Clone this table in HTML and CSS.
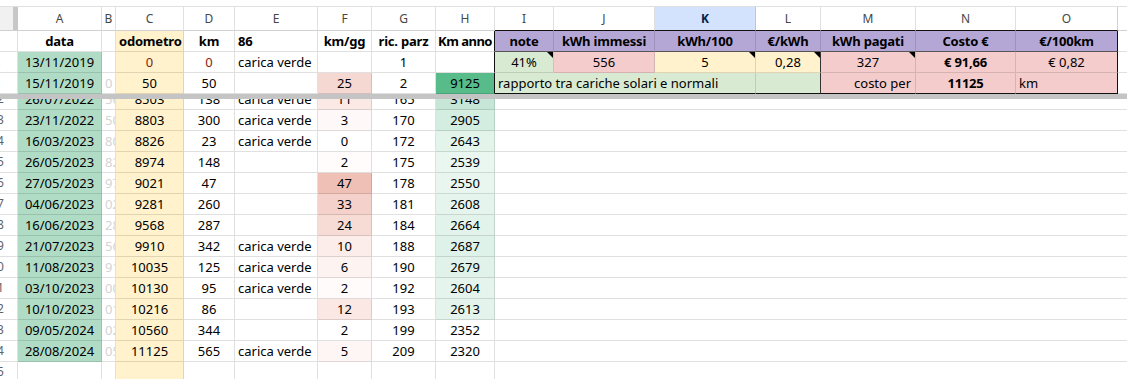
FILE: index.html
```html
<!DOCTYPE html>
<html lang="it">
<head>
<meta charset="utf-8">
<title>Foglio</title>
<link rel="stylesheet" href="styles.css">
</head>
<body>
<div class="sheet">
  <div class="gap"></div>
  <div class="row colhead">
    <div class="c w-rh corner"></div>
    <div class="c w-a">A</div>
    <div class="c w-b">B</div>
    <div class="c w-c">C</div>
    <div class="c w-d">D</div>
    <div class="c w-e">E</div>
    <div class="c w-f">F</div>
    <div class="c w-g">G</div>
    <div class="c w-h edge-r">H</div>
    <div class="c w-i blk-b">I</div>
    <div class="c w-j blk-b">J</div>
    <div class="c w-k blk-b sel">K</div>
    <div class="c w-l blk-b">L</div>
    <div class="c w-m blk-b">M</div>
    <div class="c w-n blk-b">N</div>
    <div class="c w-o blk-b edge-r">O</div>
    <div class="c w-p"></div>
  </div>

  <div class="frozen">
    <div class="row">
      <div class="c w-rh rh"><span>1</span></div>
      <div class="c w-a b">data</div>
      <div class="c w-b"></div>
      <div class="c w-c yel b">odometro</div>
      <div class="c w-d b">km</div>
      <div class="c w-e left b">86</div>
      <div class="c w-f b">km/gg</div>
      <div class="c w-g b">ric. parz</div>
      <div class="c w-h b tight edge-r">Km anno</div>
      <div class="c w-i pur b hd">note</div>
      <div class="c w-j pur b hd">kWh immessi</div>
      <div class="c w-k pur b hd">kWh/100</div>
      <div class="c w-l pur b hd">€/kWh</div>
      <div class="c w-m pur b hd">kWh pagati</div>
      <div class="c w-n pur b hd">Costo €</div>
      <div class="c w-o pur b hd edge-r">€/100km</div>
      <div class="c w-p"></div>
    </div>
    <div class="row">
      <div class="c w-rh rh"><span>2</span></div>
      <div class="c w-a grn">13/11/2019</div>
      <div class="c w-b faint"></div>
      <div class="c w-c yel red">0</div>
      <div class="c w-d red">0</div>
      <div class="c w-e left">carica verde</div>
      <div class="c w-f"></div>
      <div class="c w-g">1</div>
      <div class="c w-h edge-r"></div>
      <div class="c w-i lgrn note">41%</div>
      <div class="c w-j pnk">556</div>
      <div class="c w-k yel note">5</div>
      <div class="c w-l yel note dark-r">0,28</div>
      <div class="c w-m pnk note">327</div>
      <div class="c w-n pnk b">€ 91,66</div>
      <div class="c w-o pnk edge-r">€ 0,82</div>
      <div class="c w-p"></div>
    </div>
    <div class="row">
      <div class="c w-rh rh"><span>3</span></div>
      <div class="c w-a grn">15/11/2019</div>
      <div class="c w-b faint">0</div>
      <div class="c w-c yel">50</div>
      <div class="c w-d">50</div>
      <div class="c w-e"></div>
      <div class="c w-f" style="background:#f6d8d2">25</div>
      <div class="c w-g">2</div>
      <div class="c w-h edge-r" style="background:#57bb8a">9125</div>
      <div class="c w-ijk lgrn left blk-bb">rapporto tra cariche solari e normali</div>
      <div class="c w-l lgrn blk-bb dark-r"></div>
      <div class="c w-m pnk right blk-bb">costo per</div>
      <div class="c w-n pnk b blk-bb">11125</div>
      <div class="c w-o pnk left blk-bb edge-r">km</div>
      <div class="c w-p"></div>
    </div>
  </div>

  <div class="freeze"></div>

  <div class="scroll">
    <div class="scroll-inner">
      <div class="row"><div class="c w-rh rh"><span>42</span></div><div class="c w-a grn">26/07/2022</div><div class="c w-b faint">56</div><div class="c w-c yel">8503</div><div class="c w-d">138</div><div class="c w-e left">carica verde</div><div class="c w-f" style="background:#fbe9e6">11</div><div class="c w-g">165</div><div class="c w-h" style="background:#c6e7d7">3148</div><div class="c w-rest"></div></div>
      <div class="row"><div class="c w-rh rh"><span>43</span></div><div class="c w-a grn">23/11/2022</div><div class="c w-b faint">50</div><div class="c w-c yel">8803</div><div class="c w-d">300</div><div class="c w-e left">carica verde</div><div class="c w-f" style="background:#fef9f8">3</div><div class="c w-g">170</div><div class="c w-h" style="background:#d3ede1">2905</div><div class="c w-rest"></div></div>
      <div class="row"><div class="c w-rh rh"><span>44</span></div><div class="c w-a grn">16/03/2023</div><div class="c w-b faint">80</div><div class="c w-c yel">8826</div><div class="c w-d">23</div><div class="c w-e left">carica verde</div><div class="c w-f">0</div><div class="c w-g">172</div><div class="c w-h" style="background:#e3f4eb">2643</div><div class="c w-rest"></div></div>
      <div class="row"><div class="c w-rh rh"><span>45</span></div><div class="c w-a grn">26/05/2023</div><div class="c w-b faint">82</div><div class="c w-c yel">8974</div><div class="c w-d">148</div><div class="c w-e left"></div><div class="c w-f" style="background:#fffcfb">2</div><div class="c w-g">175</div><div class="c w-h" style="background:#eaf6f0">2539</div><div class="c w-rest"></div></div>
      <div class="row"><div class="c w-rh rh"><span>46</span></div><div class="c w-a grn">27/05/2023</div><div class="c w-b faint">97</div><div class="c w-c yel">9021</div><div class="c w-d">47</div><div class="c w-e left"></div><div class="c w-f" style="background:#efc0b6">47</div><div class="c w-g">178</div><div class="c w-h" style="background:#e9f6ef">2550</div><div class="c w-rest"></div></div>
      <div class="row"><div class="c w-rh rh"><span>47</span></div><div class="c w-a grn">04/06/2023</div><div class="c w-b faint">02</div><div class="c w-c yel">9281</div><div class="c w-d">260</div><div class="c w-e left"></div><div class="c w-f" style="background:#f4d2cb">33</div><div class="c w-g">181</div><div class="c w-h" style="background:#e5f4ed">2608</div><div class="c w-rest"></div></div>
      <div class="row"><div class="c w-rh rh"><span>48</span></div><div class="c w-a grn">16/06/2023</div><div class="c w-b faint">28</div><div class="c w-c yel">9568</div><div class="c w-d">287</div><div class="c w-e left"></div><div class="c w-f" style="background:#f7dcd6">24</div><div class="c w-g">184</div><div class="c w-h" style="background:#e1f3ea">2664</div><div class="c w-rest"></div></div>
      <div class="row"><div class="c w-rh rh"><span>49</span></div><div class="c w-a grn">21/07/2023</div><div class="c w-b faint">56</div><div class="c w-c yel">9910</div><div class="c w-d">342</div><div class="c w-e left">carica verde</div><div class="c w-f" style="background:#fcedea">10</div><div class="c w-g">188</div><div class="c w-h" style="background:#dff2e9">2687</div><div class="c w-rest"></div></div>
      <div class="row"><div class="c w-rh rh"><span>50</span></div><div class="c w-a grn">11/08/2023</div><div class="c w-b faint">91</div><div class="c w-c yel">10035</div><div class="c w-d">125</div><div class="c w-e left">carica verde</div><div class="c w-f" style="background:#fdf4f2">6</div><div class="c w-g">190</div><div class="c w-h" style="background:#e0f2e9">2679</div><div class="c w-rest"></div></div>
      <div class="row"><div class="c w-rh rh"><span>51</span></div><div class="c w-a grn">03/10/2023</div><div class="c w-b faint">003</div><div class="c w-c yel">10130</div><div class="c w-d">95</div><div class="c w-e left">carica verde</div><div class="c w-f" style="background:#fffbfb">2</div><div class="c w-g">192</div><div class="c w-h" style="background:#e5f4ed">2604</div><div class="c w-rest"></div></div>
      <div class="row"><div class="c w-rh rh"><span>52</span></div><div class="c w-a grn">10/10/2023</div><div class="c w-b faint">012</div><div class="c w-c yel">10216</div><div class="c w-d">86</div><div class="c w-e left"></div><div class="c w-f" style="background:#fbe8e5">12</div><div class="c w-g">193</div><div class="c w-h" style="background:#e4f4ec">2613</div><div class="c w-rest"></div></div>
      <div class="row"><div class="c w-rh rh"><span>53</span></div><div class="c w-a grn">09/05/2024</div><div class="c w-b faint">021</div><div class="c w-c yel">10560</div><div class="c w-d">344</div><div class="c w-e left"></div><div class="c w-f">2</div><div class="c w-g">199</div><div class="c w-h">2352</div><div class="c w-rest"></div></div>
      <div class="row"><div class="c w-rh rh"><span>54</span></div><div class="c w-a grn">28/08/2024</div><div class="c w-b faint">056</div><div class="c w-c yel">11125</div><div class="c w-d">565</div><div class="c w-e left">carica verde</div><div class="c w-f" style="background:#fef6f4">5</div><div class="c w-g">209</div><div class="c w-h">2320</div><div class="c w-rest"></div></div>
      <div class="row"><div class="c w-rh rh"><span>55</span></div><div class="c w-a"></div><div class="c w-b"></div><div class="c w-c yel"></div><div class="c w-d"></div><div class="c w-e"></div><div class="c w-f"></div><div class="c w-g"></div><div class="c w-h"></div><div class="c w-rest"></div></div>
    </div>
  </div>
</div>
</body>
</html>
```
FILE: styles.css
```css
* { box-sizing: border-box; }

body {
  margin: 0;
  background: #fff;
  font-family: "Noto Sans", "Open Sans", sans-serif;
  font-size: 13px;
  color: #000;
  overflow: hidden;
}

.sheet {
  width: 1127px;
  height: 379px;
  overflow: hidden;
}

.gap { height: 6px; }

.row {
  display: flex;
  height: 21px;
}

.c {
  flex: none;
  height: 21px;
  border-right: 1px solid rgba(0, 0, 0, 0.12);
  border-bottom: 1px solid rgba(0, 0, 0, 0.12);
  line-height: 20px;
  white-space: nowrap;
  overflow: hidden;
  text-align: center;
  padding: 0 3px;
  position: relative;
}

/* column header */
.colhead {
  height: 25px;
  border-top: 1px solid #e0e0e0;
}
.colhead .c {
  height: 24px;
  line-height: 23px;
  font-size: 12px;
  color: #444746;
  border-bottom-color: #d0d0d0;
  padding: 0;
}
.colhead .corner {
  background: linear-gradient(to right, #f1f1f1 0, #f1f1f1 13px, #c7c7c7 13px);
  border-right: 1px solid #c7c7c7;
}
.colhead .sel {
  background: #d3e3fd;
  color: #041e49;
  font-weight: bold;
}

/* widths */
.w-rh { width: 18px; }
.w-a { width: 84px; }
.w-b { width: 14px; }
.w-c { width: 68px; }
.w-d { width: 51px; }
.w-e { width: 83px; }
.w-f { width: 54px; }
.w-g { width: 64px; }
.w-h { width: 59px; }
.w-i { width: 59px; }
.w-j { width: 101px; }
.w-k { width: 101px; }
.w-ijk { width: 261px; }
.w-l { width: 65px; }
.w-m { width: 95px; }
.w-n { width: 100px; }
.w-o { width: 102px; }
.w-p { flex: 1 1 auto; border-right: none; }
.w-rest { flex: 1 1 auto; border-right: none; }

/* row header: a wide, centred label of which only the right end is visible */
.rh {
  padding: 0;
  font-size: 12px;
  color: #5f6368;
}
.rh span {
  display: block;
  width: 40px;
  margin-left: -23px;
  text-align: center;
}

/* text formats */
.b { font-weight: bold; letter-spacing: -0.2px; }
.tight { padding: 0; letter-spacing: -0.5px; }
.left { text-align: left; }
.right { text-align: right; padding-right: 4px; }
.red { color: #8b2212; }
.faint {
  color: #d4d4d4;
  text-align: left;
  padding: 0 0 0 3px;
}

/* fills */
.grn { background: #b0dcc6; }
.yel { background: #fff2cc; }
.pur { background: #b4a7d6; }
.lgrn { background: #d9ead3; }
.pnk { background: #f4cccc; }

/* black block borders */
.edge-r { border-right: 1px solid #111; }
.blk-b { border-bottom: 1px solid #111; }
.blk-bb { border-bottom: 1px solid #111; }
.hd { border-bottom: 1px solid #555; }
.dark-r { border-right: 1px solid #333; }
.colhead .blk-b { border-bottom: 1px solid #111; }
.colhead .edge-r { border-right: 1px solid rgba(0, 0, 0, 0.12); }
.colhead .w-o.edge-r { border-right: 1px solid #d0d0d0; }

/* comment indicator */
.note::after {
  content: "";
  position: absolute;
  top: 0;
  right: 0;
  width: 0;
  height: 0;
  border-top: 6px solid #000;
  border-left: 6px solid transparent;
}

/* freeze bar */
.freeze {
  height: 5px;
  background: #c4c4c4;
}

.scroll {
  height: 280px;
  overflow: hidden;
}
.scroll-inner {
  margin-top: -10px;
}
```
